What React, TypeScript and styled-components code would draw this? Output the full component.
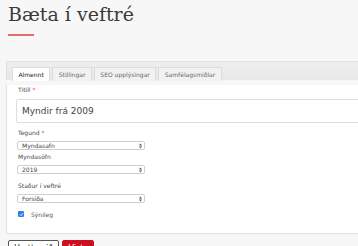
import * as React from "react";
import styled, { createGlobalStyle } from "styled-components";

const GlobalStyle = createGlobalStyle`
  html, body {
    margin: 0;
    padding: 0;
    background: #f7f7f7;
  }
  body {
    font-family: "DejaVu Sans", Verdana, sans-serif;
    color: #333;
  }
`;

const Page = styled.div`
  width: 358px;
  height: 246px;
  overflow: hidden;
  padding: 0 0 0 6px;
  box-sizing: border-box;
`;

const Title = styled.h1`
  margin: 0;
  padding: 2px 0 0 2px;
  font-family: "DejaVu Serif", serif;
  font-weight: normal;
  font-size: 19px;
  line-height: 24px;
  color: #3a3a3a;
`;

const TitleRule = styled.div`
  width: 26px;
  height: 2px;
  margin: 8px 0 0 2px;
  background: #df6e6e;
`;

const Panel = styled.div`
  margin-top: 25px;
  width: 400px;
`;

const TabStrip = styled.div`
  display: flex;
  gap: 2px;
  height: 19px;
  box-sizing: border-box;
  padding: 5px 0 0 5px;
  background: linear-gradient(#eeeeee, #e8e8e8);
  border: 1px solid #e0e0e0;
  border-bottom: none;
`;

const Tab = styled.div<{ $active?: boolean }>`
  display: flex;
  align-items: center;
  padding: 0 5.5px;
  height: 14px;
  font-size: 6px;
  color: ${(p) => (p.$active ? "#222" : "#666")};
  background: ${(p) => (p.$active ? "#fff" : "#f2f2f2")};
  border: 1px solid #dcdcdc;
  border-bottom: none;
  box-sizing: border-box;
`;

const Content = styled.div`
  background: #fff;
  border: 1px solid #e2e2e2;
  border-top: none;
  padding: 0 0 0 9px;
  height: 149px;
  box-sizing: border-box;
`;

const Label = styled.div<{ $gap: number }>`
  font-size: 6px;
  line-height: 9px;
  color: #4a4a4a;
  padding-left: 2px;
  margin-top: ${(p) => p.$gap}px;
`;

const Star = styled.span`
  color: #e33;
`;

const TextInput = styled.div`
  margin-top: 5px;
  height: 24px;
  box-sizing: border-box;
  border: 1px solid #ddd;
  border-radius: 2px;
  display: flex;
  align-items: center;
  padding-left: 5px;
  font-size: 9px;
  color: #444;
`;

const SelectBox = styled.div`
  margin-top: 4px;
  margin-left: 1px;
  width: 128px;
  height: 9px;
  box-sizing: border-box;
  border: 1px solid #cfcfcf;
  border-radius: 2px;
  display: flex;
  align-items: center;
  justify-content: space-between;
  padding: 0 2px 0 4px;
  font-size: 6px;
  color: #444;
`;

const CheckRow = styled.div`
  display: flex;
  align-items: center;
  gap: 7px;
  margin-top: 8px;
  padding-left: 2px;
  height: 6px;
  font-size: 6px;
  color: #555;
`;

const CheckBox = styled.span`
  width: 6px;
  height: 6px;
  border-radius: 1px;
  background: #2f7fe8;
  display: flex;
  align-items: center;
  justify-content: center;
`;

const Actions = styled.div`
  display: flex;
  gap: 3px;
  margin-top: 6px;
  padding-left: 2px;
`;

const Button = styled.button<{ $primary?: boolean }>`
  font-family: "DejaVu Sans", Verdana, sans-serif;
  font-size: 8px;
  height: 16px;
  padding: 0 5px;
  border-radius: 2px;
  border: 1px solid ${(p) => (p.$primary ? "#cc1020" : "#555")};
  background: ${(p) => (p.$primary ? "#cc1020" : "#fff")};
  color: ${(p) => (p.$primary ? "#fff" : "#222")};
`;

const Arrows = () => (
  <svg width="3" height="6" viewBox="0 0 3 6">
    <path d="M0 2.5 L1.5 0.5 L3 2.5 Z M0 3.5 L1.5 5.5 L3 3.5 Z" fill="#555" />
  </svg>
);

const Select = ({ value }: { value: string }) => (
  <SelectBox>
    <span>{value}</span>
    <Arrows />
  </SelectBox>
);

export default function App() {
  return (
    <Page>
      <GlobalStyle />
      <Title>Bæta í veftré</Title>
      <TitleRule />
      <Panel>
        <TabStrip>
          <Tab $active>Almennt</Tab>
          <Tab>Stillingar</Tab>
          <Tab>SEO upplýsingar</Tab>
          <Tab>Samfélagsmiðlar</Tab>
        </TabStrip>
        <Content>
          <Label $gap={5}>
            Titill <Star>*</Star>
          </Label>
          <TextInput>Myndir frá 2009</TextInput>
          <Label $gap={5}>
            Tegund <Star>*</Star>
          </Label>
          <Select value="Myndasafn" />
          <Label $gap={2}>Myndasöfn</Label>
          <Select value="2019" />
          <Label $gap={7}>Staður í veftré</Label>
          <Select value="Forsíða" />
          <CheckRow>
            <CheckBox>
              <svg width="5" height="5" viewBox="0 0 5 5">
                <path d="M1 2.6 L2 3.6 L4 1.3" stroke="#fff" strokeWidth="0.9" fill="none" />
              </svg>
            </CheckBox>
            Sýnileg
          </CheckRow>
        </Content>
        <Actions>
          <Button>Hætta við</Button>
          <Button $primary>Vista</Button>
        </Actions>
      </Panel>
    </Page>
  );
}
